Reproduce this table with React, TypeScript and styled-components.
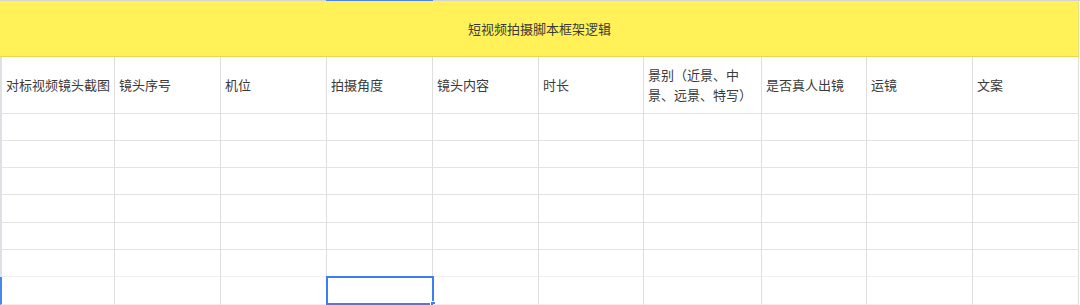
import React from "react";
import styled, { createGlobalStyle } from "styled-components";

const Global = createGlobalStyle`
  html, body { margin: 0; padding: 0; background: #fff; }
  body { font-family: "Noto Sans CJK SC", "Noto Sans", sans-serif; color: #333; }
`;

const Page = styled.div`
  width: 1080px;
  height: 305px;
  overflow: hidden;
  background: #fff;
`;

const TopBar = styled.div`
  display: flex;
  height: 1px;
  background: #d4d4d4;
`;

const TopSegment = styled.div<{ $w: number; $active?: boolean }>`
  width: ${(p) => p.$w}px;
  flex: none;
  background: ${(p) => (p.$active ? "#4a86e8" : "#d4d4d4")};
`;

const TitleBar = styled.div`
  height: 55px;
  width: 1079px;
  background: #fff157;
  border-bottom: 1px solid #e6d94e;
  box-shadow: inset -1px 0 0 #ece27a;
  display: flex;
  align-items: center;
  justify-content: center;
  font-size: 13px;
  color: #3a3a3a;
`;

const COLS = [115, 106, 106, 106, 106, 105, 118, 105, 106, 106];

const Grid = styled.div`
  display: grid;
  grid-template-columns: ${COLS.map((c) => c + "px").join(" ")};
  width: 1079px;
`;

const Row = styled.div<{ $h: number; $selected?: boolean }>`
  display: contents;
  & > div {
    height: ${(p) => p.$h}px;
  }
  & > div:first-child {
    border-left: 2px solid ${(p) => (p.$selected ? "#4a86e8" : "#dde0e5")};
  }
`;

const Cell = styled.div<{ $rowLine?: string }>`
  box-sizing: border-box;
  position: relative;
  border-right: 1px solid #dedede;
  border-bottom: 1px solid ${(p) => p.$rowLine || "#e3e3e3"};
  padding: 0 6px 0 5px;
  display: flex;
  align-items: center;
  font-size: 13px;
  line-height: 20px;
  color: #3a3a3a;
  white-space: pre-line;
`;

const HeadCell = styled(Cell)<{ $nowrap?: boolean }>`
  padding-left: 4px;
  padding-right: ${(p) => (p.$nowrap ? "0" : "6px")};
  white-space: ${(p) => (p.$nowrap ? "nowrap" : "pre-line")};
  overflow: visible;
`;

const Selection = styled.div`
  position: absolute;
  left: -1px;
  top: -1px;
  right: -2px;
  bottom: -1px;
  border: 2px solid #3d7ef4;
  pointer-events: none;
  &::after {
    content: "";
    position: absolute;
    right: -4px;
    bottom: -4px;
    width: 4px;
    height: 4px;
    background: #3d7ef4;
    border: 1px solid #fff;
  }
`;

const headers = [
  "对标视频镜头截图",
  "镜头序号",
  "机位",
  "拍摄角度",
  "镜头内容",
  "时长",
  "景别（近景、中\n景、远景、特写）",
  "是否真人出镜",
  "运镜",
  "文案",
];

const rowHeights = [27, 27, 27, 28, 27, 27, 28];

export default function App() {
  return (
    <Page>
      <Global />
      <TopBar>
        <TopSegment $w={326} />
        <TopSegment $w={107} $active />
        <TopSegment $w={647} />
      </TopBar>
      <TitleBar>短视频拍摄脚本框架逻辑</TitleBar>
      <Grid>
        <Row $h={57}>
          {headers.map((h, i) => (
            <HeadCell key={i} $nowrap={i === 0}>
              {h}
            </HeadCell>
          ))}
        </Row>
        {rowHeights.map((h, r) => {
          const selected = r === rowHeights.length - 1;
          const lightLine = r === rowHeights.length - 2 ? "#efefef" : undefined;
          return (
            <Row key={r} $h={h} $selected={selected}>
              {COLS.map((_, c) => (
                <Cell key={c} $rowLine={selected ? "#eeeeee" : lightLine}>
                  {selected && c === 3 ? <Selection /> : null}
                </Cell>
              ))}
            </Row>
          );
        })}
      </Grid>
    </Page>
  );
}
